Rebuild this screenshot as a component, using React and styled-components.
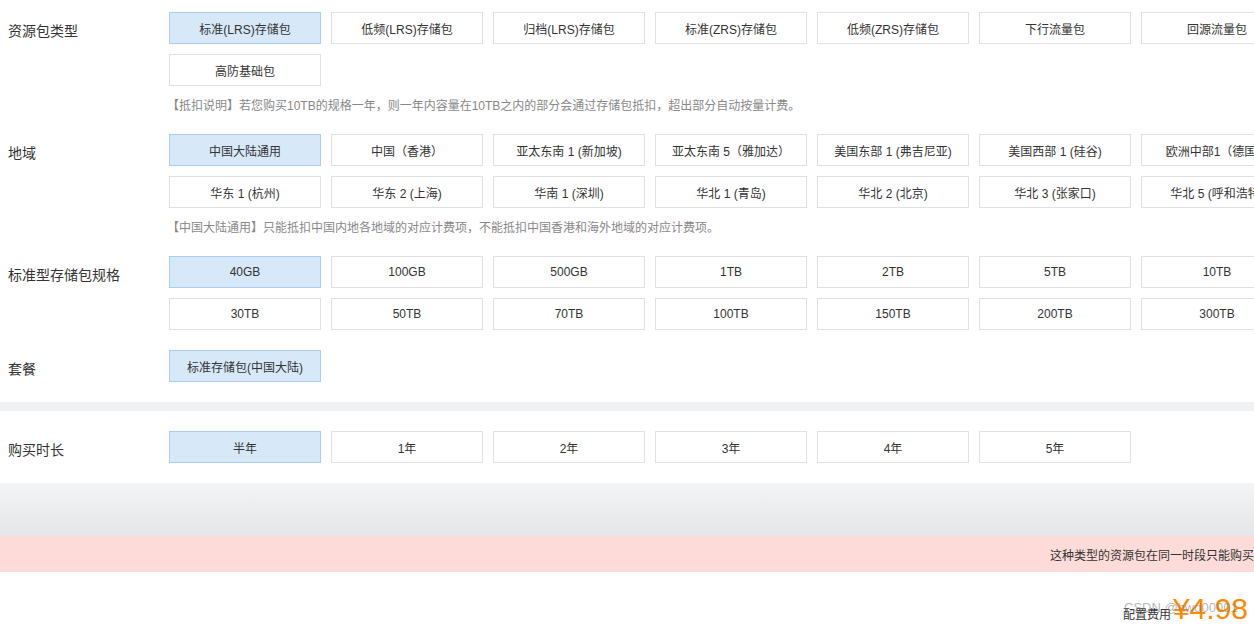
import React from "react";
import styled, { createGlobalStyle } from "styled-components";

const Global = createGlobalStyle`
  html, body { margin: 0; padding: 0; background: #fff; overflow: hidden; }
  body {
    font-family: "Liberation Sans", "Noto Sans CJK SC", sans-serif;
    color: #333;
    width: 1254px;
  }
`;

const Page = styled.div`
  width: 1254px;
  display: flex;
  flex-direction: column;
`;

const Panel = styled.div`
  display: flex;
  flex-direction: column;
  padding: ${(p) => p.$pad || "12px 0 0"};
  background: #fff;
`;

const Section = styled.div`
  display: flex;
  align-items: flex-start;
  margin-bottom: ${(p) => (p.$last ? "0" : "20px")};
`;

const Label = styled.div`
  width: 161px;
  flex-shrink: 0;
  padding-left: 8px;
  padding-top: 6px;
  font-size: 14px;
  line-height: 26px;
  color: #333;
`;

const Body = styled.div`
  display: flex;
  flex-direction: column;
  width: 1124px;
  flex-shrink: 0;
`;

const Options = styled.div`
  display: flex;
  flex-wrap: wrap;
  gap: 10px;
`;

const Option = styled.div`
  box-sizing: border-box;
  width: 152px;
  height: 32px;
  display: flex;
  align-items: center;
  justify-content: center;
  white-space: nowrap;
  font-size: 12px;
  color: #333;
  background: ${(p) => (p.$active ? "#d7e8f8" : "#fff")};
  border: 1px solid ${(p) => (p.$active ? "#a9cdee" : "#e1e1e1")};
  cursor: pointer;
`;

const Note = styled.div`
  margin: 12px 0 0 -2px;
  font-size: 12px;
  line-height: 16px;
  color: #888;
  white-space: nowrap;
`;

const Divider = styled.div`
  height: 9px;
  background: #f0f1f3;
`;

const GreyBand = styled.div`
  height: 53px;
  background: linear-gradient(#f3f4f5, #e5e6e8);
`;

const Alert = styled.div`
  height: 36px;
  background: #fddbd8;
  display: flex;
  align-items: center;
  padding-left: 1050px;
  font-size: 12px;
  color: #333;
  white-space: nowrap;
  overflow: hidden;
`;

const Footer = styled.div`
  position: relative;
  height: 53px;
  display: flex;
  justify-content: flex-end;
  align-items: baseline;
  padding-right: 6px;
  padding-top: 22px;
  box-sizing: border-box;
`;

const FeeLabel = styled.span`
  font-size: 12px;
  color: #333;
  margin-right: 2px;
`;

const Price = styled.span`
  font-size: 30px;
  line-height: 30px;
  color: #ff8a00;
  font-family: "Liberation Sans", Arial, sans-serif;
`;

const Watermark = styled.span`
  position: absolute;
  left: 1124px;
  top: 28px;
  font-size: 13px;
  line-height: 16px;
  color: rgba(120, 120, 120, 0.55);
  white-space: nowrap;
  font-family: "Liberation Sans", sans-serif;
`;

const sections = [
  {
    label: "资源包类型",
    options: [
      "标准(LRS)存储包",
      "低频(LRS)存储包",
      "归档(LRS)存储包",
      "标准(ZRS)存储包",
      "低频(ZRS)存储包",
      "下行流量包",
      "回源流量包",
      "高防基础包",
    ],
    note: "【抵扣说明】若您购买10TB的规格一年，则一年内容量在10TB之内的部分会通过存储包抵扣，超出部分自动按量计费。",
  },
  {
    label: "地域",
    options: [
      "中国大陆通用",
      "中国（香港）",
      "亚太东南 1 (新加坡)",
      "亚太东南 5（雅加达）",
      "美国东部 1 (弗吉尼亚)",
      "美国西部 1 (硅谷)",
      "欧洲中部1（德国）",
      "华东 1 (杭州)",
      "华东 2 (上海)",
      "华南 1 (深圳)",
      "华北 1 (青岛)",
      "华北 2 (北京)",
      "华北 3 (张家口)",
      "华北 5 (呼和浩特)",
    ],
    note: "【中国大陆通用】只能抵扣中国内地各地域的对应计费项，不能抵扣中国香港和海外地域的对应计费项。",
  },
  {
    label: "标准型存储包规格",
    options: [
      "40GB", "100GB", "500GB", "1TB", "2TB", "5TB", "10TB",
      "30TB", "50TB", "70TB", "100TB", "150TB", "200TB", "300TB",
    ],
  },
  {
    label: "套餐",
    options: ["标准存储包(中国大陆)"],
  },
];

function Group({ label, options, note, last }) {
  return (
    <Section $last={last}>
      <Label>{label}</Label>
      <Body>
        <Options>
          {options.map((o, i) => (
            <Option key={o} $active={i === 0}>{o}</Option>
          ))}
        </Options>
        {note && <Note>{note}</Note>}
      </Body>
    </Section>
  );
}

export default function App() {
  return (
    <>
      <Global />
      <Page>
        <Panel $pad="12px 0 20px">
          {sections.map((s, i) => (
            <Group key={s.label} {...s} last={i === sections.length - 1} />
          ))}
        </Panel>
        <Divider />
        <Panel $pad="20px 0 20px">
          <Group
            label="购买时长"
            options={["半年", "1年", "2年", "3年", "4年", "5年"]}
            last
          />
        </Panel>
        <GreyBand />
        <Alert>这种类型的资源包在同一时段只能购买一个，如需更多容量请选择更大的规格。</Alert>
        <Footer>
          <FeeLabel>配置费用</FeeLabel>
          <Price>¥4.98</Price>
          <Watermark>CSDN @hwd00001</Watermark>
        </Footer>
      </Page>
    </>
  );
}
